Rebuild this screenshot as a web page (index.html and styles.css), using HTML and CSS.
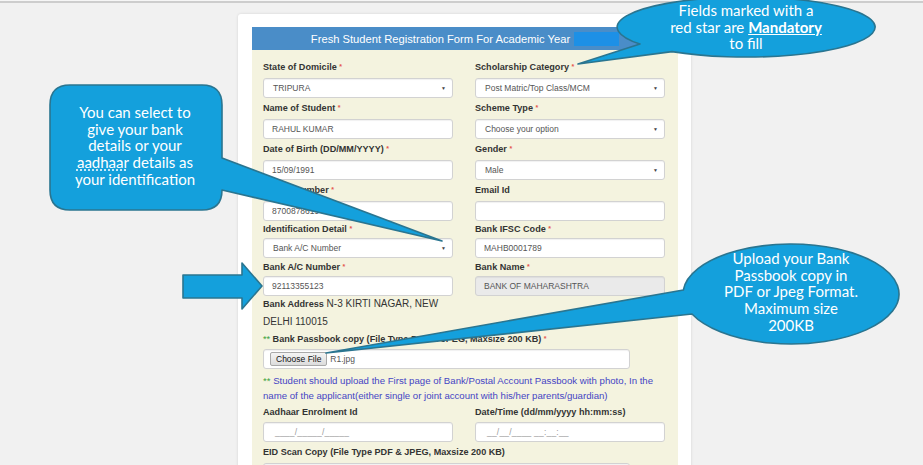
FILE: index.html
```html
<!DOCTYPE html>
<html>
<head>
<meta charset="utf-8">
<title>Fresh Student Registration</title>
<link rel="stylesheet" href="styles.css">
</head>
<body>
<div class="topline"></div>
<main class="page">
  <section class="card">
    <div class="panel">
      <div class="panel-head"><span class="title">Fresh Student Registration Form For Academic Year</span><span class="redact"></span></div>
      <div class="panel-body">
        <div class="grid">
          <div class="fg"><div class="lbl">State of Domicile <span class="req">*</span></div><div class="ctl sel">TRIPURA<span class="caret">&#9660;</span></div></div>
          <div class="fg"><div class="lbl">Scholarship Category <span class="req">*</span></div><div class="ctl sel">Post Matric/Top Class/MCM<span class="caret">&#9660;</span></div></div>
          <div class="fg"><div class="lbl">Name of Student <span class="req">*</span></div><div class="ctl">RAHUL KUMAR</div></div>
          <div class="fg"><div class="lbl">Scheme Type <span class="req">*</span></div><div class="ctl sel">Choose your option<span class="caret">&#9660;</span></div></div>
          <div class="fg"><div class="lbl">Date of Birth (DD/MM/YYYY) <span class="req">*</span></div><div class="ctl">15/09/1991</div></div>
          <div class="fg"><div class="lbl">Gender <span class="req">*</span></div><div class="ctl sel">Male<span class="caret">&#9660;</span></div></div>
          <div class="fg"><div class="lbl">Mobile Number <span class="req">*</span></div><div class="ctl">8700878619</div></div>
          <div class="fg"><div class="lbl">Email Id</div><div class="ctl"></div></div>
          <div class="fg"><div class="lbl lbl-s">Identification Detail <span class="req">*</span></div><div class="ctl sel">Bank A/C Number<span class="caret">&#9660;</span></div></div>
          <div class="fg"><div class="lbl lbl-s">Bank IFSC Code <span class="req">*</span></div><div class="ctl">MAHB0001789</div></div>
          <div class="fg"><div class="lbl lbl-m">Bank A/C Number <span class="req">*</span></div><div class="ctl">92113355123</div></div>
          <div class="fg"><div class="lbl lbl-m">Bank Name <span class="req">*</span></div><div class="ctl ctl-dis">BANK OF MAHARASHTRA</div></div>
          <div class="address"><b>Bank Address</b> N-3 KIRTI NAGAR, NEW DELHI 110015</div>
        </div>
        <div class="lbl lbl-f"><span class="stars">**</span> Bank Passbook copy (File Type PDF &amp; JPEG, Maxsize 200 KB) <span class="req">*</span></div>
        <div class="ctl file"><span class="btn">Choose File</span><span class="fname">R1.jpg</span></div>
        <p class="note"><span class="stars">**</span> Student should upload the First page of Bank/Postal Account Passbook with photo, In the name of the applicant(either single or joint account with his/her parents/guardian)</p>
        <div class="grid">
          <div class="fg"><div class="lbl lbl-f">Aadhaar Enrolment Id</div><div class="ctl mask">____/_____/_____</div></div>
          <div class="fg"><div class="lbl lbl-f">Date/Time (dd/mm/yyyy hh:mm:ss)</div><div class="ctl mask">__/__/____ __:__:__</div></div>
        </div>
        <div class="lbl">EID Scan Copy (File Type PDF &amp; JPEG, Maxsize 200 KB)</div>
        <div class="ctl file"></div>
      </div>
    </div>
  </section>
</main>

<svg class="overlay" width="923" height="465" viewBox="0 0 923 465" xmlns="http://www.w3.org/2000/svg">
  <g class="shape">
    <path d="M 640 44.1 L 578 64 L 672 51.6 A 129 30 0 1 0 640 44.1 Z"/>
    <path d="M 70 85 H 202 Q 222 85 222 105 V 158 L 442 241 L 222 190 Q 222 210 202 210 H 70 Q 50 210 50 190 V 105 Q 50 85 70 85 Z"/>
    <path d="M 683.35 290 L 326 353 L 692 314 A 108 50 0 1 0 683.35 290 Z"/>
    <path d="M 183 275 H 242 V 263 L 262 286 L 242 309 V 298 H 183 Z"/>
  </g>
</svg>
<div class="co co-top">Fields marked with a<br>red star are <b>Mandatory</b><br>to fill</div>
<div class="co co-left">You can select to<br>give your bank<br>details or your<br><span class="sq">aadhaar</span> details as<br>your identification</div>
<div class="co co-bottom">Upload your Bank<br>Passbook copy in<br>PDF or Jpeg Format.<br>Maximum size<br>200KB</div>
</body>
</html>
```
FILE: styles.css
```css
* { box-sizing: border-box; }
html, body { margin: 0; padding: 0; }
body {
  width: 923px;
  height: 465px;
  overflow: hidden;
  background: #f1f1f1;
  font-family: "Liberation Sans", Arial, sans-serif;
  color: #333;
  position: relative;
}
.topline {
  height: 3px;
  border-top: 1px solid #f6f6f6;
  border-bottom: 2px solid #cdcdcd;
}
.page {
  padding: 11px 0 0 238px;
}
.card {
  width: 453px;
  height: 470px;
  background: #fff;
  border-radius: 3px;
  box-shadow: 0 0 3px rgba(0,0,0,0.12);
  padding: 13px 13px 0 14px;
}
.panel-head {
  height: 23px;
  background: #4a8dc8;
  color: #fff;
  display: flex;
  align-items: center;
  justify-content: center;
  gap: 4px;
  font-size: 11.2px;
}
.redact {
  display: inline-block;
  width: 45px;
  height: 14px;
  background: #1d90e6;
}
.panel-body {
  background: #f4f3df;
  padding: 7px 13px 20px 11px;
  height: 420px;
}
.grid {
  display: grid;
  grid-template-columns: 190px 190px;
  column-gap: 22px;
}
.lbl {
  font-size: 9.1px;
  font-weight: 700;
  color: #333;
  height: 20px;
  line-height: 20px;
  margin-bottom: 1px;
  white-space: nowrap;
}
.lbl-s { height: 16px; line-height: 16px; }
.lbl-m { height: 17px; line-height: 17px; }
.lbl-f { height: 18px; line-height: 18px; }
.req {
  color: #e5564e;
  font-size: 7px;
  vertical-align: 1px;
}
.stars { color: #3aa13a; font-weight: 400; }
.ctl {
  height: 20px;
  background: #fff;
  border: 1px solid #d2d2d2;
  border-radius: 3px;
  box-shadow: inset 0 1px 1px rgba(0,0,0,0.06);
  font-size: 8.5px;
  line-height: 18px;
  color: #555;
  padding: 0 8px;
  position: relative;
  white-space: nowrap;
}
.sel { padding-left: 9px; }
.caret {
  position: absolute;
  right: 6px;
  top: 0;
  font-size: 5px;
  color: #444;
}
.ctl-dis { background: #eaeaea; }
.address {
  grid-column: 1;
  font-size: 10px;
  line-height: 17px;
  margin-top: -1px;
  color: #333;
}
.address b { font-weight: 700; font-size: 9.1px; }
.file {
  width: 367px;
  padding: 0 0 0 6px;
  display: flex;
  align-items: center;
  gap: 3px;
}
.btn {
  height: 14px;
  line-height: 12px;
  padding: 0 5px;
  border: 1px solid #a9a9a9;
  border-radius: 2px;
  background: linear-gradient(#f4f4f4, #dcdcdc);
  color: #111;
  font-size: 8.5px;
}
.note {
  margin: 4px 0 0 0;
  font-size: 9.65px;
  line-height: 15px;
  color: #4545c4;
}
.mask { color: #999; padding-left: 11px; letter-spacing: 0.2px; }

.overlay {
  position: absolute;
  left: 0;
  top: 0;
  pointer-events: none;
}
.shape path {
  fill: #14a0dc;
  stroke: #2a7590;
  stroke-width: 1.6;
  stroke-linejoin: round;
}
.co {
  position: absolute;
  color: #fff;
  font-family: Lato, "Open Sans", sans-serif;
  font-size: 15px;
  line-height: 16.7px;
  text-align: center;
  white-space: nowrap;
}
.co b { font-weight: 700; text-decoration: underline; }
.co-top { left: 636px; width: 220px; top: 2px; }
.co-left { left: 30px; width: 210px; top: 104px; }
.co-bottom { left: 691px; width: 200px; top: 250px; }
.sq { text-decoration: underline dotted; text-underline-offset: 2px; }
```
